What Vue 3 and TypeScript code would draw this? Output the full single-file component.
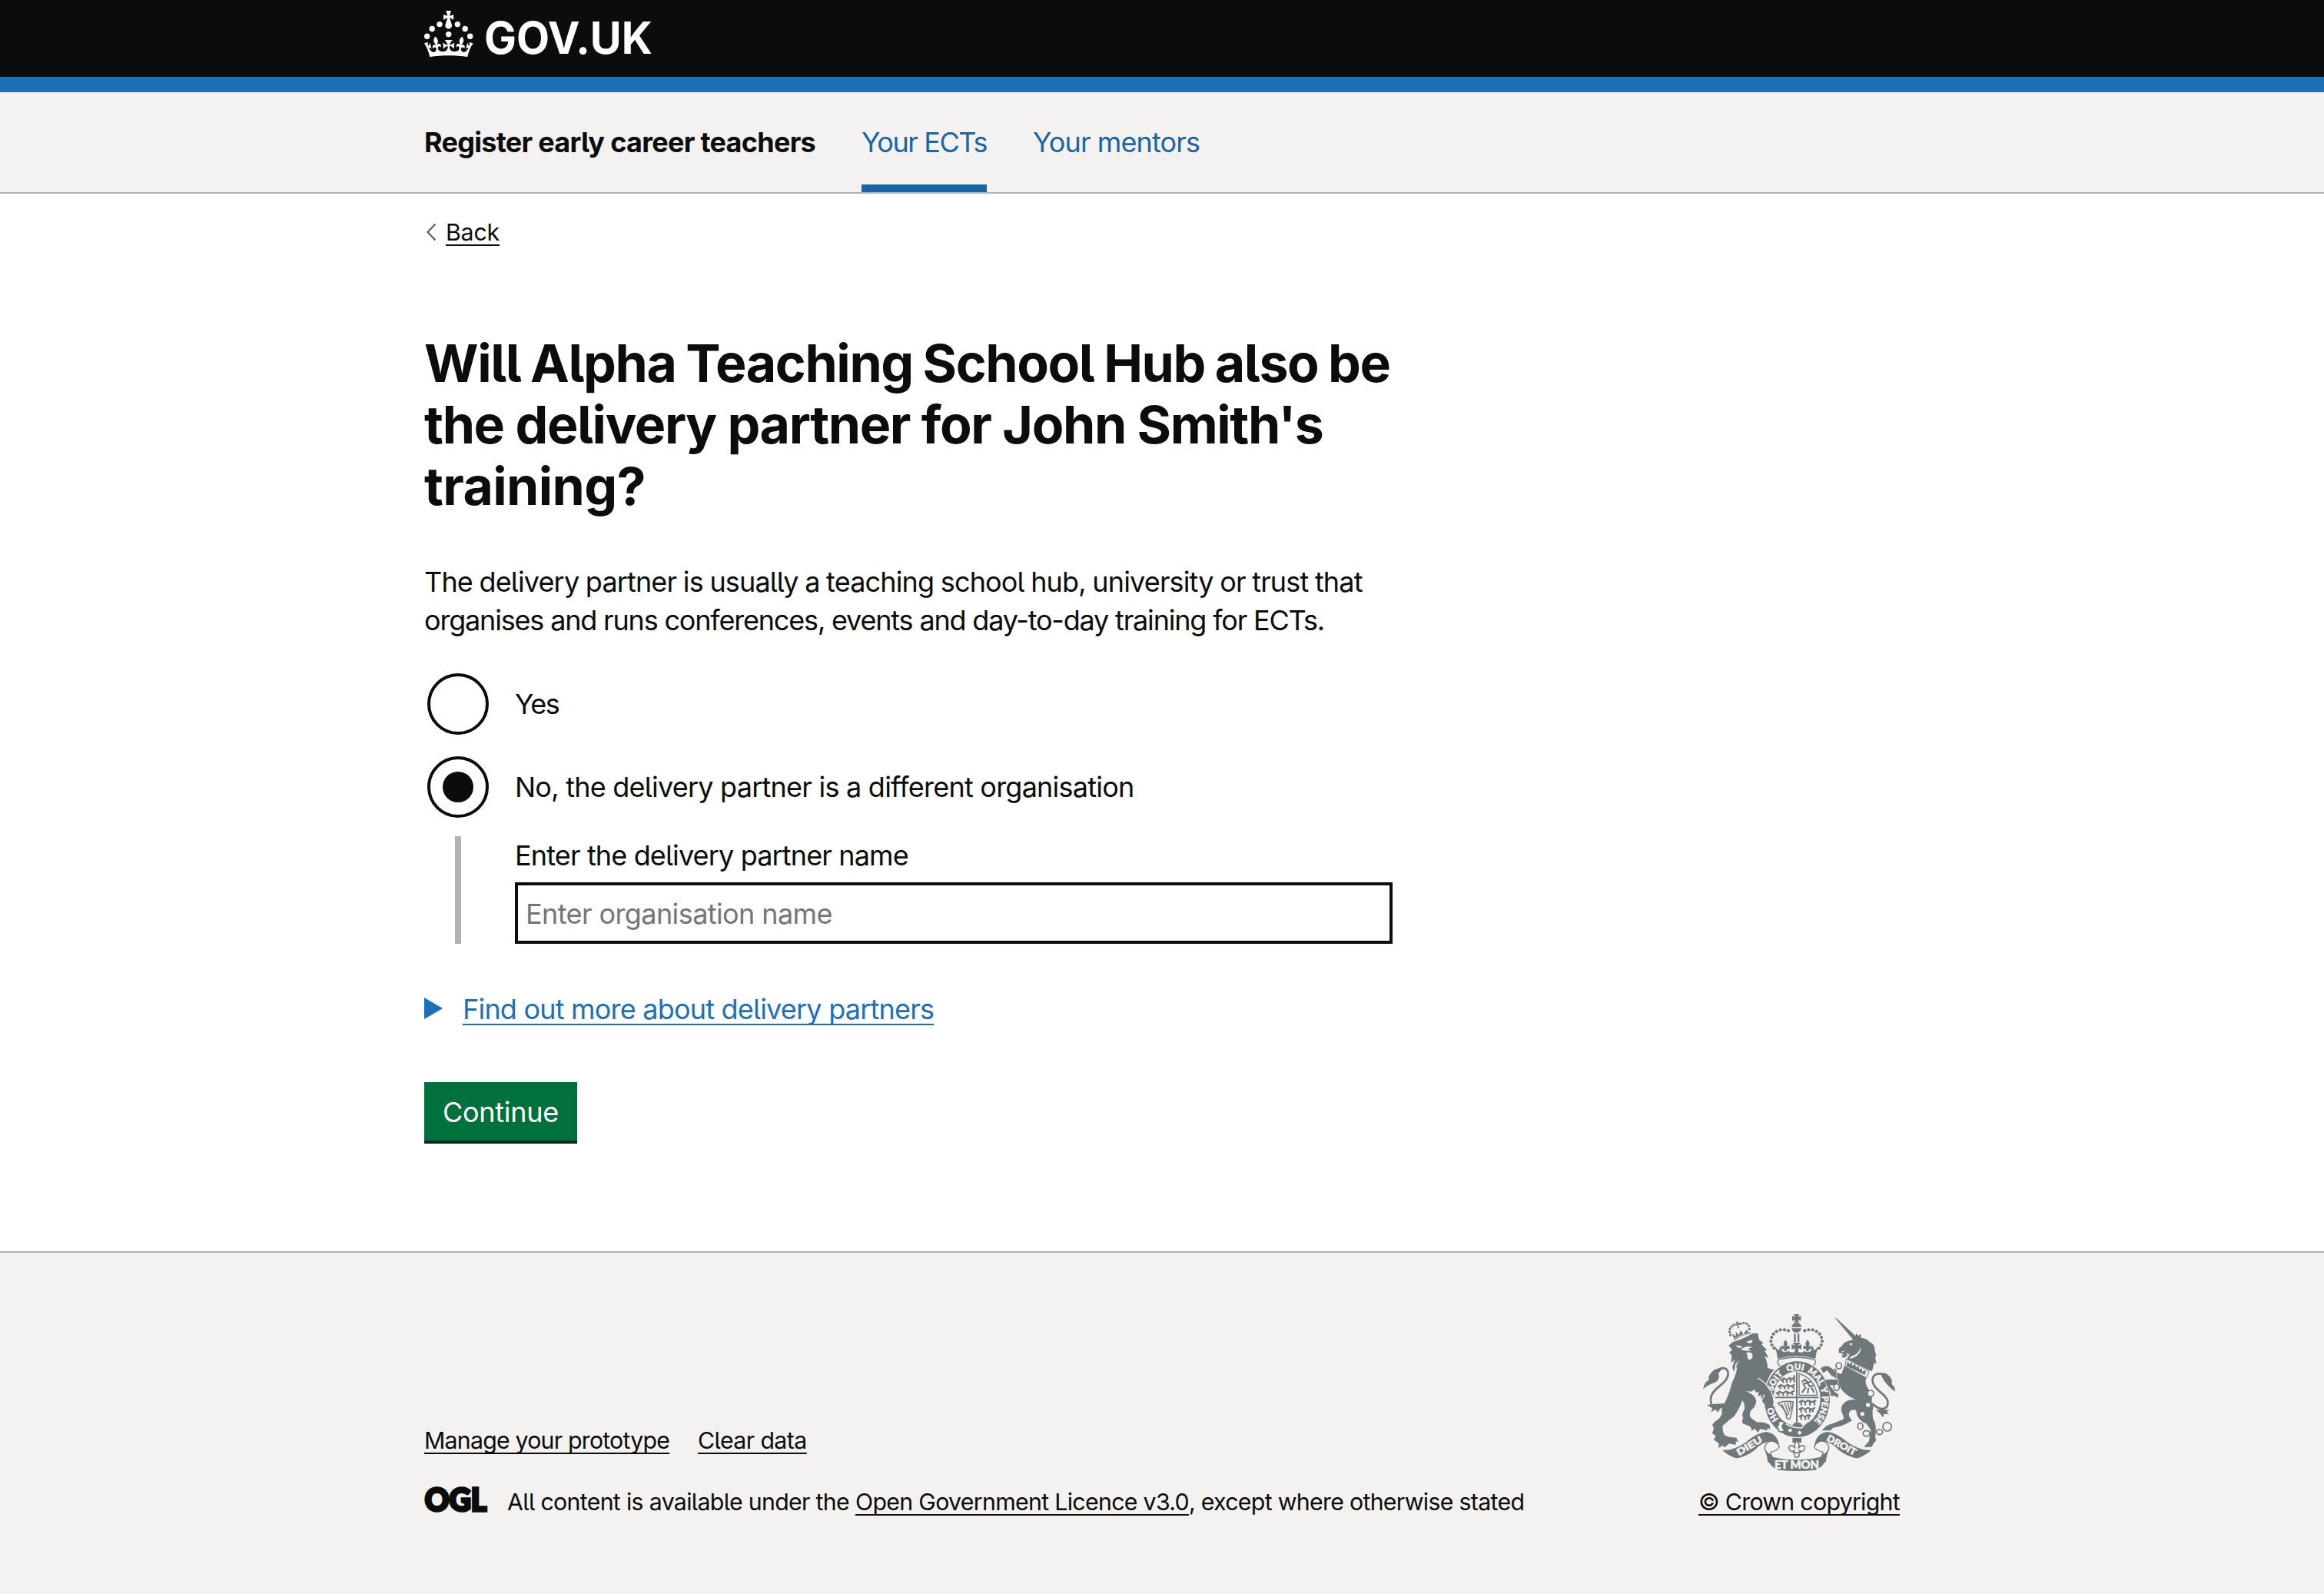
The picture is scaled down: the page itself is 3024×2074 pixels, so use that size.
<script setup lang="ts">
import { ref } from 'vue'

interface Choice {
  value: string
  label: string
  fit: string
}

const choices: Choice[] = [
  { value: 'yes', label: 'Yes', fit: 'fit-yes' },
  { value: 'no', label: 'No, the delivery partner is a different organisation', fit: 'fit-no' },
]

const selected = ref('no')
const organisation = ref('')

const crownDots: [number, number][] = [
  [411, 124], [396, 121], [380, 121], [365, 127], [353, 137], [346, 150], [343, 165], [347, 180], [355, 192],
]
const lionCrownDots: [number, number][] = [
  [155, 411], [152, 399], [153, 387], [159, 378], [168, 372], [195, 367], [207, 364], [219, 367], [227, 376], [229, 388],
]
const garterWords: [string, string][] = [
  ['HO', '16.5%'], ['SOIT', '35.5%'], ['QUI', '49%'], ['MAL', '61.5%'], ['Y', '70%'], ['PENSE', '81%'],
]
</script>

<template>
  <div class="page">
    <header class="header">
      <div class="container header-inner">
        <svg class="logo" viewBox="0 0 300 60" width="300" height="60" fill="#fff" role="img" aria-label="GOV.UK">
          <circle cx="20" cy="17.6" r="3.7" />
          <circle cx="10.2" cy="23.5" r="3.7" />
          <circle cx="3.7" cy="33.2" r="3.7" />
          <circle cx="31.7" cy="30.6" r="3.7" />
          <circle cx="43.3" cy="17.6" r="3.7" />
          <circle cx="53.2" cy="23.5" r="3.7" />
          <circle cx="59.7" cy="33.2" r="3.7" />
          <path d="M33.1,9.8c.2-.1.3-.3.5-.5l4.6,2.4v-6.8l-4.6,1.5c-.1-.2-.3-.3-.5-.5l1.9-5.9h-6.7l1.9,5.9c-.2.1-.3.3-.5.5l-4.6-1.5v6.8l4.6-2.4c.1.2.3.3.5.5l-2.6,8c-.9,2.8,1.2,5.7,4.1,5.7h0c3,0,5.1-2.9,4.1-5.7l-2.6-8ZM37,37.9s-3.4,3.8-4.1,6.1c2.2,0,4.2-.5,6.4-2.8l-.7,8.5c-2-2.8-4.4-4.1-5.7-3.8.1,3.1.5,6.7,5.8,7.2,3.7.3,6.7-1.5,7-3.8.4-2.6-2-4.3-3.7-1.6-1.4-4.5,2.4-6.1,4.9-3.2-1.9-4.5-1.8-7.7,2.4-10.9,3,4,2.6,7.3-1.2,11.1,2.4-1.3,6.2,0,4,4.6-1.2-2.8-3.7-2.2-4.2.2-.3,1.7.7,3.7,3,4.2,1.9.3,4.7-.9,7-5.9-1.3,0-2.4.7-3.9,1.7l2.4-8c.6,2.3,1.4,3.7,2.2,4.5.6-1.6.5-2.8,0-5.3l5,1.8c-2.6,3.6-5.2,8.7-7.3,17.5-7.4-1.1-15.7-1.7-24.5-1.7h0c-8.8,0-17.1.6-24.5,1.7-2.1-8.9-4.7-13.9-7.3-17.5l5-1.8c-.5,2.5-.6,3.7,0,5.3.8-.8,1.6-2.3,2.2-4.5l2.4,8c-1.5-1-2.6-1.7-3.9-1.7,2.3,5,5.2,6.2,7,5.9,2.3-.4,3.3-2.4,3-4.2-.5-2.4-3-3.1-4.2-.2-2.2-4.6,1.6-6,4-4.6-3.7-3.7-4.2-7.1-1.2-11.1,4.2,3.2,4.3,6.4,2.4,10.9,2.5-2.8,6.3-1.3,4.9,3.2-1.8-2.7-4.1-1-3.7,1.6.3,2.3,3.3,4.1,7,3.8,5.4-.5,5.7-4.2,5.8-7.2-1.3-.2-3.7,1-5.7,3.8l-.7-8.5c2.2,2.3,4.2,2.7,6.4,2.8-.7-2.3-4.1-6.1-4.1-6.1h10.6Z" />
          <text class="wordmark" x="78" y="56" textLength="219" lengthAdjust="spacingAndGlyphs">GOV.UK</text>
        </svg>
      </div>
    </header>

    <nav class="service-nav">
      <div class="container nav-inner">
        <span class="service-name"><span class="fit-service">Register early career teachers</span></span>
        <a class="nav-link active"><span class="fit-ects">Your ECTs</span></a>
        <a class="nav-link"><span class="fit-mentors">Your mentors</span></a>
      </div>
    </nav>

    <main class="container main">
      <a class="back">
        <svg class="back-icon" viewBox="0 0 14 24" width="14" height="24">
          <path d="M12.500 1.500 2.500 12l10 10.500" fill="none" stroke="#505a5f" stroke-width="2" />
        </svg>
        <span class="link-small fit-back">Back</span>
      </a>

      <h1>
        <span class="line fit-h1a">Will Alpha Teaching School Hub also be</span>
        <span class="line fit-h1b">the delivery partner for John Smith's</span>
        <span class="line fit-h1c">training?</span>
      </h1>

      <p class="body">
        <span class="line fit-p1">The delivery partner is usually a teaching school hub, university or trust that</span>
        <span class="line fit-p2">organises and runs conferences, events and day-to-day training for ECTs.</span>
      </p>

      <div class="radios">
        <label v-for="c in choices" :key="c.value" class="radio" @click="selected = c.value">
          <span class="dial"><span v-if="selected === c.value" class="dot"></span></span>
          <span :class="c.fit">{{ c.label }}</span>
        </label>
      </div>

      <div class="conditional">
        <label class="field-label" for="organisation"><span class="fit-enter">Enter the delivery partner name</span></label>
        <input id="organisation" v-model="organisation" class="field" type="text" placeholder="Enter organisation name" />
      </div>

      <div class="details">
        <svg class="details-icon" viewBox="0 0 24 28" width="24" height="28"><path d="M0 0v28l24-14z" fill="#1d70b8" /></svg>
        <span class="details-text fit-find">Find out more about delivery partners</span>
      </div>

      <button class="button" type="button"><span class="fit-continue">Continue</span></button>
    </main>

    <footer class="footer">
      <div class="container footer-inner">
        <div class="footer-left">
          <div class="footer-links">
            <a class="link-small fit-manage">Manage your prototype</a>
            <a class="link-small fit-clear">Clear data</a>
          </div>
          <div class="licence">
            <svg class="ogl" viewBox="0 0 82 34" width="82" height="34" role="img" aria-label="OGL">
              <text class="ogl-text" x="0.700" y="31.700" textLength="80.500" lengthAdjust="spacingAndGlyphs">OGL</text>
            </svg>
            <span class="licence-text"><span class="fit-l1">All content is available under the </span><a class="link-small fit-l2">Open Government Licence v3.0</a><span class="fit-l3">, except where otherwise stated</span></span>
          </div>
        </div>

        <div class="footer-right">
          <svg class="crest" viewBox="78 60 750 612" width="250" height="204" fill="#6e7779">
            <defs>
              <path id="garter-path" d="M445 507A98 115 0 0 1 445 277A98 115 0 0 1 445 507" />
            </defs>

            <!-- lion -->
            <g transform="translate(30 -270)">
              <path fill="none" stroke="#6e7779" stroke-width="8" d="M158 650C130 705 76 712 78 660C80 618 146 602 146 562C144 532 114 538 102 552" />
              <path d="M122 544Q98 538 86 552Q62 574 73 584Q52 596 48 622Q72 602 94 597Q116 584 108 560ZM63 684L88 681 132 678 104 713 98 701 80 712 84 697Z" />
              <path d="M148 452L165 438Q210 424 243 404L262 404 266 428 283 442 276 448 298 470 288 472 304 500 288 494Q300 515 300 540L326 547Q305 565 300 596Q320 630 322 684L314 678 308 690 296 672 286 680Q274 664 286 655L290 650 274 660 276 645 262 650 266 632 254 636 250 624 235 632 215 630Q252 645 256 668Q255 690 235 705Q228 718 232 730Q248 748 262 752Q285 748 308 762L310 780 300 773 298 784 272 778 262 792 250 776 238 786Q238 770 225 765L203 757Q198 745 205 735Q196 722 210 700Q212 680 202 666Q190 700 170 728Q140 750 125 765Q122 785 132 802Q150 812 178 812L186 828 176 826 176 840 150 835 132 850 124 842 108 852 110 835 90 820 98 805 84 795 90 775 84 762 93 750Q120 735 122 715Q118 700 130 680Q150 645 160 600Q175 570 180 545L178 530 190 510 174 526 170 556 162 538 172 508 158 520 160 490 150 480 162 468Z" />
              <g fill="#f3f2f1">
                <path d="M176 451l26 4-8 7-12-3zM218 437l25-8-6 13-12 1z" />
                <path d="M196 468Q212 452 240 458L224 466 234 474 212 472Z" />
                <path d="M216 482Q228 474 240 484Q246 502 230 508Q216 502 222 490Z" />
              </g>
              <path d="M170 432L162 406 176 416 176 398 188 412 194 392 206 409 218 390 226 402 233 398 232 407Q200 410 170 432Z" />
              <path fill="none" stroke="#f3f2f1" stroke-width="2.500" d="M169 426Q200 408 232 405" />
              <path d="M176 360l10-2-2 7 7-2 2 9-7-2 3 14-6 1-1-13-6 4-3-9 7 1z" />
              <circle v-for="([x, y], i) in lionCrownDots" :key="i" :cx="x" :cy="y" r="5" />
            </g>

            <!-- unicorn -->
            <g transform="translate(510 30)">
              <path d="M83 44L88 45 169 120 156 132Z" />
              <path d="M156 128Q166 118 165 104L174 114 184 107 184 122Q212 126 218 138Q240 148 238 170L244 190 240 200 245 224 236 218 232 236 228 252 216 248 130 205Q136 195 140 186L126 184 132 192 116 201 108 192 116 188 108 182 98 180 98 165Q112 152 120 140Q138 132 156 128Z" />
              <path fill="#f3f2f1" d="M138 146q8-6 14 0l-6 6zM184 158Q186 188 150 202L140 204 144 196Q176 186 184 158ZM108 176l14-4-8 7z" />
              <path fill="none" stroke="#6e7779" stroke-width="8" d="M272 264C238 256 224 274 232 300C242 330 282 340 289 370C292 402 262 412 228 378" />
              <path d="M262 265Q278 305 318 332L316 316Q300 300 306 290Q296 262 272 259ZM243 404L266 402 296 404 284 412 294 420 274 419 270 433 258 416Z" />
              <path d="M120 232L206 278Q196 298 215 325Q232 350 226 372Q236 390 230 405Q228 440 240 455Q245 480 240 510L244 522Q232 534 226 548L196 548 216 525 222 480 205 457Q180 447 170 425L165 405Q146 398 138 415Q135 430 150 445Q110 470 75 473L66 484 32 484Q48 462 70 458L115 440Q120 432 110 415Q100 385 130 368Q150 360 165 364Q122 345 106 320L100 306 62 308 80 332 97 344 92 358 84 350 60 348 66 340 46 308Q38 290 58 284L92 284 68 270 52 248 36 258 26 242Q40 228 60 234L85 256 108 264Z" />
              <path fill="#f3f2f1" stroke="#6e7779" stroke-width="3" d="M128 204L216 252 206 278 122 232Z" />
              <path d="M127 232l7-20 5 14 9-10 4 16 10-9 3 15 10-7 3 15 10-6 2 14 14-5-4 18z" />
              <g fill="#f3f2f1"><circle cx="212" cy="384" r="8" /><circle cx="190" cy="419" r="8" /></g>
              <g fill="#f3f2f1" stroke="#6e7779" stroke-width="5">
                <ellipse cx="98" cy="231" rx="11" ry="12" /><ellipse cx="80" cy="255" rx="8" ry="10" />
                <ellipse cx="222" cy="339" rx="12" ry="12" />
                <ellipse cx="182" cy="467" rx="10" ry="13" /><ellipse cx="206" cy="495" rx="13" ry="11" />
                <ellipse cx="257" cy="490" rx="12" ry="10" /><circle cx="287" cy="469" r="17" />
              </g>
            </g>

            <!-- royal crown -->
            <path d="M432 60h22l-6 11 12-5v20l-12-5 5 11h-20l5-11-12 5v-20l12 5zM436 94h14q11 5 12 16h-38q1-11 12-16zM424 115h38q-3 16-19 17-16-1-19-17zM433 136h7v32h-7zM447 136h7v32h-7zM428 171h30l-9 12 13-6v20l-12-4v14h-14v-14l-12 4v-20l13 6z" />
            <g v-for="m in 2" :key="m" :transform="m === 2 ? 'translate(886 0) scale(-1 1)' : undefined">
              <circle v-for="([x, y], i) in crownDots" :key="i" :cx="x" :cy="y" r="6.200" />
              <path d="M400 160q13 14 4 25l9-3q8 7 0 15l-8-2v10h-10v-10l-8 2q-8-8 0-15l9 3q-9-11 4-25z" />
            </g>
            <path d="M357 186L374 202 380 182 386 203Q400 212 412 203Q422 214 443 205Q464 214 474 203Q486 212 500 203L506 182 512 202 529 186Q518 210 517 234Q443 212 369 234Q368 210 357 186Z" />
            <path fill="#f3f2f1" stroke="#6e7779" stroke-width="4" d="M376 236Q443 220 510 236Q524 246 510 260H376Q362 246 376 236Z" />

            <!-- garter and shield -->
            <ellipse cx="445" cy="392" rx="132" ry="152" fill="#f3f2f1" />
            <ellipse cx="445" cy="392" rx="128" ry="148" />
            <ellipse cx="444" cy="389" rx="92" ry="107" fill="#f3f2f1" />
            <path d="M441 284h6v98h82v6h-82v112h-6v-112h-82v-6h82z" />
            <g class="garter-text">
              <text v-for="[w, o] in garterWords" :key="w"><textPath href="#garter-path" :startOffset="o">{{ w }}</textPath></text>
            </g>
            <g fill="none" stroke="#6e7779" stroke-width="6.500">
              <path d="M380 320l14-10 10 6 12-8 10 6 10-10M388 312l4 16M402 312l4 16M418 308l2 18M433 298l2 28M370 344l12-8 14 6 12-7 14 7 14-8M378 336l2 16M394 338l4 14M410 336l2 16M428 336l4 16M362 370l14-8 14 6 12-7 14 7 20-10M372 362l2 16M388 364l4 14M406 362l2 16M424 362l4 14" />
              <path d="M452 404l12-7 12 6 12-7 14 7 18-7M460 398l2 18M476 402l2 14M494 398l2 18M512 398l2 18M452 432l12-7 12 7 12-7 14 7 14-8M460 426l2 18M476 430l4 14M494 426l2 18M508 428l-2 14M452 460l12-7 12 7 12-7 12 4M460 454l2 18M476 458l2 14M490 454v16" />
              <path stroke-width="4" d="M453 376V292Q514 310 524 376Z" />
              <path d="M464 366l14-18-8-16 16-4 8 14 18-6M474 312l14 16 12-6M490 348l-4 20M498 340l14 26M464 324l12-8" />
              <path stroke-width="4.500" d="M370 408Q392 396 430 402Q426 440 418 466Q410 474 404 464Q404 434 370 408ZM384 410l24 46M396 406l18 46M408 404l10 36M419 402l4 28" />
            </g>
            <path d="M434 484h24l8 12h-40z" />
            <path fill="#f3f2f1" stroke="#6e7779" stroke-width="5" d="M396 484Q380 470 372 484Q376 492 366 500Q372 508 374 516Q388 524 396 512Q378 500 396 484Z" />
            <path fill="none" stroke="#f3f2f1" stroke-width="5" d="M402 488Q428 504 462 504L480 484" />
            <g fill="#f3f2f1"><circle cx="418" cy="513" r="7" /><circle cx="455" cy="523" r="7" /></g>

            <!-- forelimbs over the garter -->
            <path d="M280 300L300 312Q342 345 352 400L350 416 342 406 338 420 326 402 316 410Q304 396 314 386L322 380 290 345Z" />
            <path fill="none" stroke="#f3f2f1" stroke-width="3.500" d="M292 309Q345 338 356 402L352 420" />
            <path stroke="#f3f2f1" stroke-width="2" d="M552 320Q556 312 580 314L606 314 606 338 574 338 592 362 608 374 604 388 594 380 570 378 576 370Z" />
            <path stroke="#f3f2f1" stroke-width="2" d="M536 272Q550 256 572 264L598 284 600 312 580 300 562 280 548 290Z" />
            <ellipse cx="599" cy="345" rx="11" ry="13" fill="#f3f2f1" stroke="#6e7779" stroke-width="5" />

            <!-- ribbon -->
            <g v-for="m in 2" :key="'r' + m" :transform="m === 2 ? 'translate(888 0) scale(-1 1)' : undefined">
              <path d="M153 590Q195 594 245 560Q290 522 325 519Q370 524 377 580Q360 558 335 556Q304 564 280 590Q240 620 205 622Q175 610 153 590Z" />
              <path fill="#f3f2f1" stroke="#6e7779" stroke-width="4" d="M336 557C310 572 314 598 344 612L342 598C358 594 374 588 376 576C366 558 350 552 336 557Z" />
              <path d="M316 578Q322 600 348 610L352 628 332 640Q328 610 316 578Z" />
            </g>
            <path d="M331 612Q380 628 443 628Q506 628 557 612Q560 650 516 668Q443 676 372 668Q328 650 331 612Z" />
            <g class="motto">
              <text x="0" y="0" font-size="36" textLength="110" lengthAdjust="spacingAndGlyphs" transform="translate(218 613) rotate(-31)">DIEU</text>
              <text x="0" y="0" font-size="36" textLength="126" lengthAdjust="spacingAndGlyphs" transform="translate(558 551) rotate(29)">DROIT</text>
              <text x="357" y="662" font-size="43" textLength="174" lengthAdjust="spacingAndGlyphs">ET MON</text>
            </g>
            <path d="M427 543h35v18h-35z" />
            <path fill="#f3f2f1" stroke="#6e7779" stroke-width="4.500" d="M444 553Q430 570 438 584Q426 566 414 576Q410 590 424 596L434 592 430 600H438L434 612Q444 626 454 612L450 600H458L454 592 464 596Q480 590 474 576Q462 566 450 584Q458 570 444 553Z" />
            <path fill="none" stroke="#6e7779" stroke-width="4" d="M430 600H458" />
          </svg>
          <a class="link-small fit-crown">© Crown copyright</a>
        </div>
      </div>
    </footer>
  </div>
</template>

<style>
body {
  margin: 0;
  background: #fff;
}
</style>

<style scoped>
.page {
  display: flex;
  flex-direction: column;
  min-height: 2074px;
  color: #0b0c0c;
  font-family: Inter, Roboto, "Liberation Sans", sans-serif;
  font-feature-settings: "cv05";
  font-size: 36px;
  line-height: 50px;
  white-space: nowrap;
}

.container {
  box-sizing: border-box;
  width: 1920px;
  margin: 0 auto;
}

.header {
  height: 120px;
  box-sizing: border-box;
  background: #0b0c0c;
  border-bottom: 20px solid #1d70b8;
}

.header-inner {
  padding-top: 14px;
}

.logo {
  display: block;
  overflow: visible;
}

.wordmark {
  font-size: 57.5px;
  font-weight: 700;
}

.service-nav {
  background: #f3f2f1;
  border-bottom: 2px solid #b1b4b6;
}

.nav-inner {
  display: flex;
  height: 130px;
}

.service-name,
.nav-link {
  display: flex;
  align-items: center;
  box-sizing: border-box;
}

.service-name {
  width: 509px;
  margin-right: 60px;
  font-weight: 700;
}

.nav-link {
  width: 217px;
  color: #1a65a6;
}

.nav-link.active {
  width: 163px;
  margin-right: 60px;
  padding-top: 10px;
  border-bottom: 10px solid #1a65a6;
}

.main {
  display: flex;
  flex-direction: column;
  align-items: flex-start;
  height: 1376px;
  padding-top: 30px;
}

.back {
  display: flex;
  align-items: center;
  height: 40px;
  line-height: 40px;
}

.back-icon {
  margin-left: 2px;
  margin-right: 12px;
}

.link-small {
  font-size: 30.3px;
  text-decoration: underline;
  text-decoration-thickness: 2px;
  text-decoration-skip-ink: none;
  text-underline-offset: 5px;
}

h1 {
  margin: 110px 0 0;
  font-size: 68px;
  line-height: 80px;
  font-weight: 700;
}

.line {
  display: block;
}

.body {
  margin: 60px 0 0;
}

.radios {
  display: flex;
  flex-direction: column;
  gap: 28px;
  margin: 44px 0 0 4px;
}

.radio {
  display: flex;
  align-items: center;
  gap: 34px;
  height: 80px;
}

.dial {
  display: flex;
  align-items: center;
  justify-content: center;
  box-sizing: border-box;
  width: 80px;
  height: 80px;
  border: 4px solid #0b0c0c;
  border-radius: 50%;
}

.dot {
  width: 40px;
  height: 40px;
  border-radius: 50%;
  background: #0b0c0c;
}

.conditional {
  display: flex;
  flex-direction: column;
  box-sizing: border-box;
  width: 1220px;
  height: 140px;
  margin: 24px 0 0 40px;
  padding-left: 70px;
  border-left: 8px solid #b1b4b6;
}

.field-label {
  margin-bottom: 10px;
}

.field {
  box-sizing: border-box;
  width: 1142px;
  height: 80px;
  padding: 2px 10px 0;
  border: 4px solid #0b0c0c;
  border-radius: 0;
  background: #fff;
  font: inherit;
  font-feature-settings: inherit;
  letter-spacing: -0.59px;
}

.field::placeholder {
  color: #757575;
  opacity: 1;
}

.details {
  display: flex;
  align-items: center;
  gap: 26px;
  margin-top: 60px;
  color: #1d70b8;
}

.details-icon {
  margin-bottom: 3px;
}

.details-text {
  text-decoration: underline;
  text-decoration-thickness: 2px;
  text-decoration-skip-ink: none;
  text-underline-offset: 6px;
}

.button {
  width: 199px;
  height: 76px;
  margin-top: 70px;
  padding: 1px 0 0;
  border: 0;
  background: #00703c;
  box-shadow: 0 4px 0 #002d18;
  color: #fff;
  font: inherit;
  font-feature-settings: inherit;
}

.footer {
  flex: 1;
  border-top: 2px solid #b1b4b6;
  background: #f3f2f1;
}

.footer-inner {
  display: flex;
  justify-content: space-between;
  align-items: flex-end;
  padding-top: 80px;
  font-size: 30.3px;
  line-height: 40px;
}

.footer-links {
  display: flex;
  gap: 37px;
  margin-bottom: 40px;
}

.licence {
  display: flex;
}

.ogl {
  margin-right: 26px;
  overflow: visible;
}

.ogl-text {
  font-family: Lato, Inter, sans-serif;
  font-size: 41px;
  font-weight: 900;
  fill: #0b0c0c;
  stroke: #0b0c0c;
  stroke-width: 3.5px;
}

.licence-text {
  white-space: pre;
}

.footer-right {
  display: flex;
  flex-direction: column;
  align-items: center;
  width: 262px;
}

.crest {
  margin-bottom: 20px;
}

.garter-text,
.motto {
  fill: #f3f2f1;
  stroke: #f3f2f1;
  stroke-width: 1.8px;
  font-family: Lato, "Open Sans", sans-serif;
  font-weight: 900;
}

.garter-text {
  font-size: 34px;
  text-anchor: middle;
}

/* Tracking per text run, tuned to the widths of the service typeface */
.fit-service { letter-spacing: -0.72px; }
.fit-ects { letter-spacing: -1.4px; }
.fit-mentors { letter-spacing: -0.88px; }
.fit-back { letter-spacing: -0.2px; }
.fit-h1a { letter-spacing: -1.4px; word-spacing: -2px; }
.fit-h1b { letter-spacing: -1.4px; }
.fit-h1c { letter-spacing: -0.63px; }
.fit-p1 { letter-spacing: -0.85px; word-spacing: -0.7px; }
.fit-p2 { letter-spacing: -1.18px; }
.fit-yes { letter-spacing: -1.4px; }
.fit-no { letter-spacing: -0.76px; }
.fit-enter { letter-spacing: -0.85px; }
.fit-find { letter-spacing: -0.79px; }
.fit-continue { letter-spacing: -0.27px; }
.fit-manage { letter-spacing: -0.79px; }
.fit-clear { letter-spacing: -0.6px; }
.fit-l1 { letter-spacing: -0.68px; }
.fit-l2 { letter-spacing: -0.69px; }
.fit-l3 { letter-spacing: -0.7px; }
.fit-crown { letter-spacing: -0.72px; }
</style>
